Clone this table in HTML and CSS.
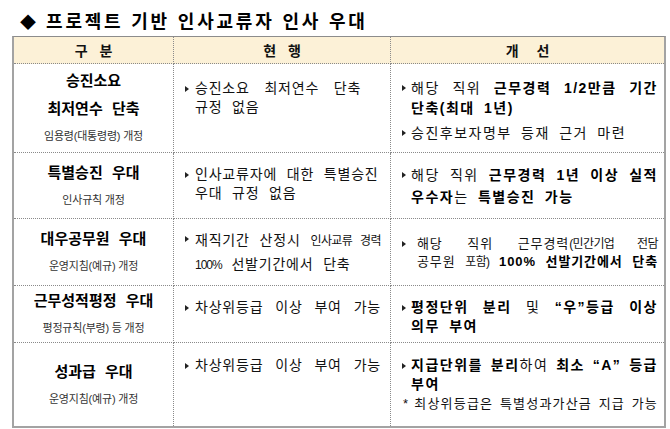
FILE: index.html
```html
<!DOCTYPE html>
<html lang="ko">
<head>
<meta charset="utf-8">
<title>프로젝트 기반 인사교류자 인사 우대</title>
<link rel="stylesheet" href="styles.css">
</head>
<body>
<h1 class="title"><span class="dia">◆</span>프로젝트 기반 인사교류자 인사 우대</h1>
<div class="table">
  <div class="cell head">구 분</div>
  <div class="cell head">현 행</div>
  <div class="cell head c3 wide">개 선</div>

  <div class="cell name">
    <div class="t">승진소요</div>
    <div class="t">최저연수 단축</div>
    <div class="s">임용령(대통령령) 개정</div>
  </div>
  <div class="cell desc d2 p1">
    <div class="item">
      <span class="bul"></span>
      <div class="lines">
        <div class="ln ws">승진소요 최저연수 단축</div>
        <div class="ln">규정 없음</div>
      </div>
    </div>
  </div>
  <div class="cell desc d3 c3 q1">
    <div class="item">
      <span class="bul"></span>
      <div class="lines">
        <div class="ln j">해당 직위 <b>근무경력 1/2만큼 기간</b></div>
        <div class="ln"><b>단축(최대 1년)</b></div>
      </div>
    </div>
    <div class="item next">
      <span class="bul"></span>
      <div class="lines">
        <div class="ln">승진후보자명부 등재 근거 마련</div>
      </div>
    </div>
  </div>

  <div class="cell name">
    <div class="t">특별승진 우대</div>
    <div class="s">인사규칙 개정</div>
  </div>
  <div class="cell desc d2 p2">
    <div class="item">
      <span class="bul"></span>
      <div class="lines">
        <div class="ln">인사교류자에 대한 특별승진</div>
        <div class="ln">우대 규정 없음</div>
      </div>
    </div>
  </div>
  <div class="cell desc d3 c3 q2">
    <div class="item">
      <span class="bul"></span>
      <div class="lines">
        <div class="ln j">해당 직위 <b>근무경력 1년 이상 실적</b></div>
        <div class="ln"><b>우수자</b>는 <b>특별승진 가능</b></div>
      </div>
    </div>
  </div>

  <div class="cell name">
    <div class="t">대우공무원 우대</div>
    <div class="s">운영지침(예규) 개정</div>
  </div>
  <div class="cell desc d2 p3">
    <div class="item">
      <span class="bul"></span>
      <div class="lines">
        <div class="ln j">재직기간 산정시 <span class="sm">인사교류 경력</span></div>
        <div class="ln"><span class="sm2">100%</span> 선발기간에서 단축</div>
      </div>
    </div>
  </div>
  <div class="cell desc d3 c3 q3">
    <div class="item">
      <span class="bul gap"></span>
      <div class="lines">
        <div class="ln j">해당 직위 근무경력<span class="sm">(민간기업 전담</span></div>
        <div class="ln j">공무원 <span class="sm">포함)</span> <b>100% 선발기간에서 단축</b></div>
      </div>
    </div>
  </div>

  <div class="cell name">
    <div class="t">근무성적평정 우대</div>
    <div class="s">평정규칙(부령) 등 개정</div>
  </div>
  <div class="cell desc d2 p4">
    <div class="item">
      <span class="bul"></span>
      <div class="lines">
        <div class="ln j">차상위등급 이상 부여 가능</div>
      </div>
    </div>
  </div>
  <div class="cell desc d3 c3 q4">
    <div class="item">
      <span class="bul"></span>
      <div class="lines">
        <div class="ln j"><b>평정단위 분리</b> 및 <b>“우”등급 이상</b></div>
        <div class="ln"><b>의무 부여</b></div>
      </div>
    </div>
  </div>

  <div class="cell name last">
    <div class="t">성과급 우대</div>
    <div class="s">운영지침(예규) 개정</div>
  </div>
  <div class="cell desc d2 p5 last">
    <div class="item">
      <span class="bul"></span>
      <div class="lines">
        <div class="ln j">차상위등급 이상 부여 가능</div>
      </div>
    </div>
  </div>
  <div class="cell desc d3 c3 q5 last">
    <div class="item">
      <span class="bul"></span>
      <div class="lines">
        <div class="ln j"><b>지급단위를 분리</b>하여 <b>최소 “A” 등급</b></div>
        <div class="ln"><b>부여</b></div>
      </div>
    </div>
    <div class="note j"><span class="star">*</span>최상위등급은 특별성과가산금 지급 가능</div>
  </div>
</div>
</body>
</html>
```
FILE: styles.css
```css
html, body {
  margin: 0;
  padding: 0;
  background: #ffffff;
}

body {
  width: 670px;
  height: 429px;
  overflow: hidden;
  font-family: "Liberation Sans", "Noto Sans CJK KR", sans-serif;
  color: #111111;
}

.title {
  margin: 0;
  height: 36px;
  box-sizing: border-box;
  padding: 6px 0 0 20px;
  font-size: 18px;
  line-height: 30px;
  font-weight: 700;
  letter-spacing: 2.8px;
  color: #000000;
}

.dia {
  font-family: "Noto Sans CJK KR", sans-serif;
  font-size: 16px;
  letter-spacing: 0;
  margin-right: 10px;
}

.table {
  margin-left: 12px;
  width: 654px;
  box-sizing: border-box;
  border: 2px solid #a3a3a3;
  border-top: 1px solid #8c8c8c;
  display: grid;
  grid-template-columns: 160px 217px 273px;
  grid-template-rows: 27px 89px 66px 67px 57px 83px;
}

.cell {
  box-sizing: border-box;
  border-right: 1px dotted #8a8a8a;
  border-bottom: 1px dotted #8a8a8a;
}

.cell.c3 {
  border-right: none;
}

.cell.last {
  border-bottom: none;
}

.head {
  background: #fcf1d7;
  display: flex;
  align-items: center;
  justify-content: center;
  font-size: 14px;
  font-weight: 700;
  word-spacing: 8px;
  color: #111111;
}

.head.wide {
  word-spacing: 14px;
}

.name {
  display: flex;
  flex-direction: column;
  align-items: center;
  justify-content: center;
}

.name .t {
  font-size: 15px;
  font-weight: 700;
  line-height: 28px;
  word-spacing: 5px;
  color: #000000;
}

.name .s {
  font-size: 11px;
  line-height: 26px;
  color: #333333;
  letter-spacing: -0.2px;
}

.desc {
  font-size: 14px;
}

.d2 {
  padding: 12px 9px 0 11px;
  line-height: 19px;
  letter-spacing: 0.8px;
  word-spacing: 5px;
}

.d3 {
  padding: 12px 6px 0 11px;
  line-height: 20px;
  letter-spacing: 1.5px;
  word-spacing: 4px;
}

.p1 { padding-top: 15px; }
.p2 { padding-top: 12px; }
.p3 { padding-top: 10px; line-height: 23px; }
.p4 { padding-top: 12px; }
.p5 { padding-top: 13px; }

.q1 { padding-top: 14px; }
.q2 { padding-top: 11px; line-height: 22px; }
.q3 { padding-top: 16px; line-height: 18px; font-size: 13px; letter-spacing: 0.9px; }
.q4 { padding-top: 12px; line-height: 19px; }
.q5 { padding-top: 13px; line-height: 19px; }

.item {
  display: flex;
  align-items: flex-start;
}

.item.next {
  margin-top: 5px;
}

.bul {
  flex: none;
  width: 0;
  height: 0;
  border-left: 4px solid #222222;
  border-top: 3px solid transparent;
  border-bottom: 3px solid transparent;
  margin-top: 7px;
  margin-right: 6px;
}

.d3 .bul {
  margin-right: 5px;
}

.q2 .bul {
  margin-top: 8px;
}

.q3 .bul {
  margin-top: 6px;
}

.bul.gap {
  margin-right: 11px;
}

.lines {
  flex: 1;
  min-width: 0;
}

.j {
  text-align: justify;
  text-align-last: justify;
  text-justify: inter-word;
  word-spacing: 0;
}

.ws {
  word-spacing: 10px;
}

.sm {
  font-size: 12px;
  letter-spacing: -0.6px;
}

.sm2 {
  font-size: 12px;
  letter-spacing: -1px;
}

b {
  font-weight: 700;
  color: #000000;
}

.note {
  font-size: 13px;
  line-height: 19px;
  letter-spacing: 1.2px;
  margin-left: 1px;
}

.star {
  margin-right: 5px;
}
```
